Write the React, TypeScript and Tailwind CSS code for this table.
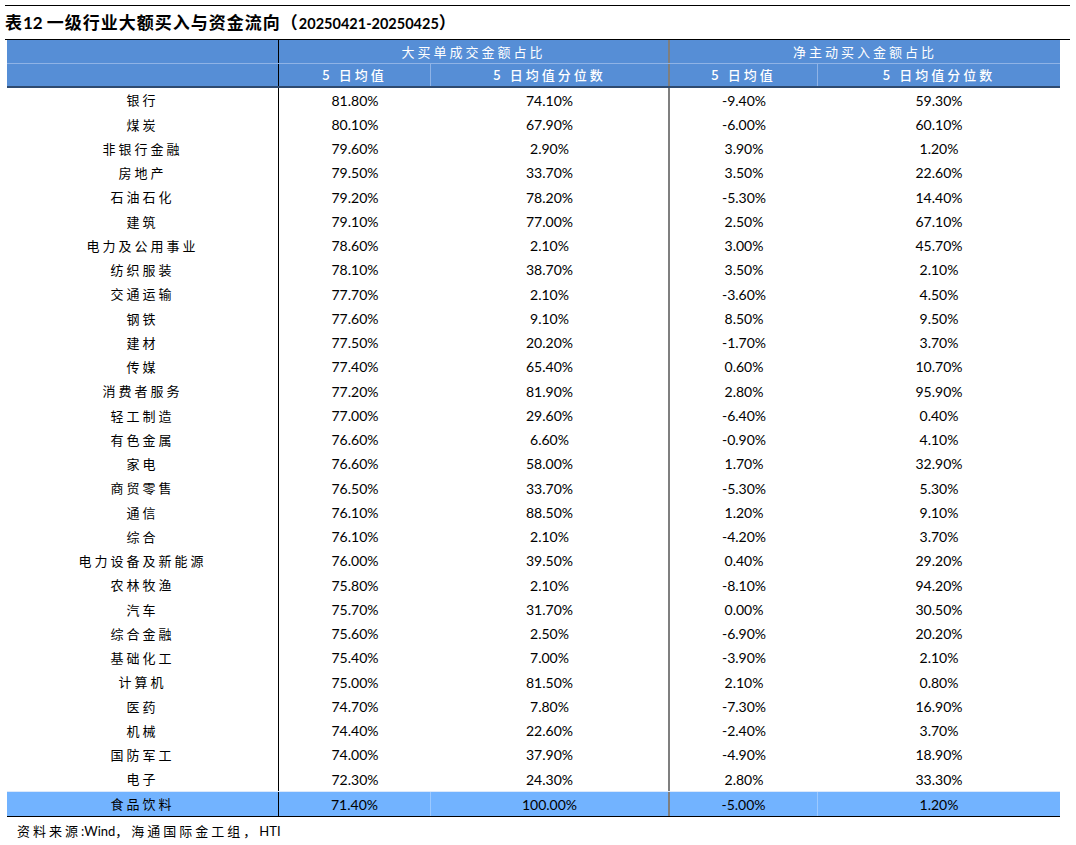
import React from "react";

const rows: [string, string, string, string, string][] = [
  ["银行", "81.80%", "74.10%", "-9.40%", "59.30%"],
  ["煤炭", "80.10%", "67.90%", "-6.00%", "60.10%"],
  ["非银行金融", "79.60%", "2.90%", "3.90%", "1.20%"],
  ["房地产", "79.50%", "33.70%", "3.50%", "22.60%"],
  ["石油石化", "79.20%", "78.20%", "-5.30%", "14.40%"],
  ["建筑", "79.10%", "77.00%", "2.50%", "67.10%"],
  ["电力及公用事业", "78.60%", "2.10%", "3.00%", "45.70%"],
  ["纺织服装", "78.10%", "38.70%", "3.50%", "2.10%"],
  ["交通运输", "77.70%", "2.10%", "-3.60%", "4.50%"],
  ["钢铁", "77.60%", "9.10%", "8.50%", "9.50%"],
  ["建材", "77.50%", "20.20%", "-1.70%", "3.70%"],
  ["传媒", "77.40%", "65.40%", "0.60%", "10.70%"],
  ["消费者服务", "77.20%", "81.90%", "2.80%", "95.90%"],
  ["轻工制造", "77.00%", "29.60%", "-6.40%", "0.40%"],
  ["有色金属", "76.60%", "6.60%", "-0.90%", "4.10%"],
  ["家电", "76.60%", "58.00%", "1.70%", "32.90%"],
  ["商贸零售", "76.50%", "33.70%", "-5.30%", "5.30%"],
  ["通信", "76.10%", "88.50%", "1.20%", "9.10%"],
  ["综合", "76.10%", "2.10%", "-4.20%", "3.70%"],
  ["电力设备及新能源", "76.00%", "39.50%", "0.40%", "29.20%"],
  ["农林牧渔", "75.80%", "2.10%", "-8.10%", "94.20%"],
  ["汽车", "75.70%", "31.70%", "0.00%", "30.50%"],
  ["综合金融", "75.60%", "2.50%", "-6.90%", "20.20%"],
  ["基础化工", "75.40%", "7.00%", "-3.90%", "2.10%"],
  ["计算机", "75.00%", "81.50%", "2.10%", "0.80%"],
  ["医药", "74.70%", "7.80%", "-7.30%", "16.90%"],
  ["机械", "74.40%", "22.60%", "-2.40%", "3.70%"],
  ["国防军工", "74.00%", "37.90%", "-4.90%", "18.90%"],
  ["电子", "72.30%", "24.30%", "2.80%", "33.30%"],
  ["食品饮料", "71.40%", "100.00%", "-5.00%", "1.20%"],
];

const cjk = "font-['Noto_Sans_CJK_SC','Noto_Sans',sans-serif]";
const num = "font-['Lato','Liberation_Sans',sans-serif]";
const cols = "grid grid-cols-[272px_152px_239px_148px_242px]";
const cell = "flex items-center justify-center";

export default function App() {
  return (
    <div className={`w-[1076px] h-[845px] bg-white overflow-hidden text-black ${cjk}`}>
      <div className="ml-[5px] w-[1065px] pt-[5px]">
        <div className="border-t border-b border-black h-[35px] flex items-center">
          <span className="text-[17px] font-bold leading-none tracking-[1px]">
            表<span className={`${num} tracking-normal`}>12 </span>一级行业大额买入与资金流向（<span className={`${num} text-[14.5px] tracking-normal`}>20250421-20250425</span>）
          </span>
        </div>
      </div>
      <div className="ml-[7px] w-[1053px]">
        <div className="bg-[#568ed6] text-white border-b-2 border-[#2e4a70]">
          <div className="grid grid-cols-[272px_391px_390px] h-[24px] border-b border-[#8fb3e6]">
            <div className="border-r-[1.5px] border-black"></div>
            <div className={`${cell} text-[13px] tracking-[3px] border-r-2 border-[#7f7f7f]`}>大买单成交金额占比</div>
            <div className={`${cell} text-[13px] tracking-[3px]`}>净主动买入金额占比</div>
          </div>
          <div className={`${cols} h-[22px] text-[13px] tracking-[3px] font-medium`}>
            <div className="border-r-[1.5px] border-black"></div>
            <div className={`${cell} border-r border-[#8fb3e6]`}>5 日均值</div>
            <div className={`${cell} border-r-2 border-[#7f7f7f]`}>5 日均值分位数</div>
            <div className={`${cell} border-r border-[#8fb3e6]`}>5 日均值</div>
            <div className={cell}>5 日均值分位数</div>
          </div>
        </div>
        <div className="border-b-[1.5px] border-black">
          {rows.map((r, i) => {
            const last = i === rows.length - 1;
            return (
              <div
                key={r[0]}
                className={last ? `${cols} h-[24.6px] bg-[#72b3ff] border-t border-[#dce9fb]` : `${cols} h-[24.25px]`}
              >
                <div className={`${cell} text-[13px] tracking-[3px] border-r-[1.5px] border-black`}>{r[0]}</div>
                <div className={last ? `${cell} ${num} text-[14px] border-r border-[#9cc9ff]` : `${cell} ${num} text-[14px]`}>{r[1]}</div>
                <div className={`${cell} ${num} text-[14px] border-r-2 border-[#7f7f7f]`}>{r[2]}</div>
                <div className={last ? `${cell} ${num} text-[14px] border-r border-[#9cc9ff]` : `${cell} ${num} text-[14px]`}>{r[3]}</div>
                <div className={`${cell} ${num} text-[14px]`}>{r[4]}</div>
              </div>
            );
          })}
        </div>
      </div>
      <div className="ml-[17px] mt-[5px] text-[13px] leading-[18px]">
        <span className="tracking-[3px]">资料来源</span>
        <span className={num}>:Wind</span>
        <span className="tracking-[3px]">，海通国际金工组，</span>
        <span className={num}>HTI</span>
      </div>
    </div>
  );
}
